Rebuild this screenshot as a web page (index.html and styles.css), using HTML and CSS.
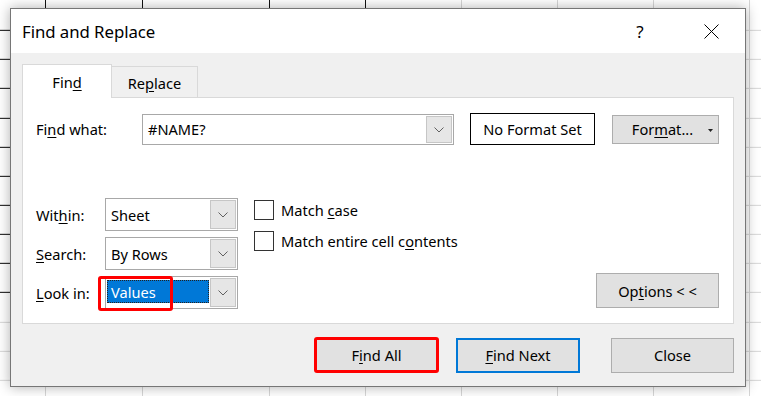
FILE: index.html
```html
<!DOCTYPE html>
<html>
<head>
<meta charset="utf-8">
<link rel="stylesheet" href="styles.css">
</head>
<body>
<div class="sheet">
  <div class="table"></div>
  <div class="dialog">
    <div class="titlebar">
      <span class="title">Find and Replace</span>
      <span class="help">?</span>
      <span class="close">
        <svg width="15" height="15" viewBox="0 0 15 15"><path d="M0.5 0.5 L14.5 14.5 M14.5 0.5 L0.5 14.5" stroke="#000" stroke-width="1" fill="none"/></svg>
      </span>
    </div>
    <div class="body">
      <div class="tabs">
        <div class="tab tab-active">Fin<u>d</u></div>
        <div class="tab tab-other">Re<u>p</u>lace</div>
      </div>
      <div class="panel">
        <div class="row-find">
          <span class="lbl lbl-find">Fi<u>n</u>d what:</span>
          <div class="combo combo-find">
            <span class="combo-text">#NAME?</span>
            <span class="drop"><svg width="10" height="6" viewBox="0 0 10 6"><path d="M0.5 0.5 L5 5 L9.5 0.5" stroke="#606060" stroke-width="1" fill="none"/></svg></span>
          </div>
          <div class="noformat">No Format Set</div>
          <div class="btn btn-format">For<u>m</u>at...<svg class="tri" width="5" height="3" viewBox="0 0 5 3"><path d="M0 0 L5 0 L2.5 3 Z" fill="#222"/></svg></div>
        </div>
        <div class="lower">
          <div class="opts">
            <div class="opt-row">
              <span class="lbl lbl-opt">Wit<u>h</u>in:</span>
              <div class="combo combo-opt">
                <span class="combo-text">Sheet</span>
                <span class="drop"><svg width="10" height="6" viewBox="0 0 10 6"><path d="M0.5 0.5 L5 5 L9.5 0.5" stroke="#606060" stroke-width="1" fill="none"/></svg></span>
              </div>
            </div>
            <div class="opt-row">
              <span class="lbl lbl-opt"><u>S</u>earch:</span>
              <div class="combo combo-opt">
                <span class="combo-text">By Rows</span>
                <span class="drop"><svg width="10" height="6" viewBox="0 0 10 6"><path d="M0.5 0.5 L5 5 L9.5 0.5" stroke="#606060" stroke-width="1" fill="none"/></svg></span>
              </div>
            </div>
            <div class="opt-row">
              <span class="lbl lbl-opt"><u>L</u>ook in:</span>
              <div class="combo combo-opt combo-focus">
                <span class="combo-sel">Values</span>
                <span class="drop"><svg width="10" height="6" viewBox="0 0 10 6"><path d="M0.5 0.5 L5 5 L9.5 0.5" stroke="#606060" stroke-width="1" fill="none"/></svg></span>
              </div>
            </div>
          </div>
          <div class="checks">
            <div class="check"><span class="box"></span><span>Match <u>c</u>ase</span></div>
            <div class="check"><span class="box"></span><span>Match entire cell c<u>o</u>ntents</span></div>
          </div>
          <div class="btn btn-options">Op<u>t</u>ions &lt; &lt;</div>
        </div>
      </div>
      <div class="actions">
        <div class="btn btn-action btn-findall">F<u>i</u>nd All</div>
        <div class="btn btn-action btn-findnext"><u>F</u>ind Next</div>
        <div class="btn btn-action btn-close">Close</div>
      </div>
    </div>
    <div class="mark"></div>
  </div>
</div>
</body>
</html>
```
FILE: styles.css
```css
* { box-sizing: border-box; }
html, body { margin: 0; padding: 0; }
body {
  font-family: "Segoe UI", "Noto Sans", "Open Sans", sans-serif;
  color: #000;
  background: #fff;
}
u { text-decoration: underline; text-underline-offset: 2px; text-decoration-thickness: 1px; }

.sheet {
  position: relative;
  width: 761px;
  height: 396px;
  overflow: hidden;
  background-color: #fff;
  background-image:
    repeating-linear-gradient(to bottom, transparent 0 28.15px, #d6d6d6 28.15px 29.15px),
    linear-gradient(to right,
      transparent 0 45px, #d6d6d6 45px 46px,
      transparent 46px 142px, #d6d6d6 142px 143px,
      transparent 143px 269px, #d6d6d6 269px 270px,
      transparent 270px 365px, #d6d6d6 365px 366px,
      transparent 366px 461px, #d6d6d6 461px 462px,
      transparent 462px 557px, #d6d6d6 557px 558px,
      transparent 558px 653px, #d6d6d6 653px 654px,
      transparent 654px 749px, #d6d6d6 749px 750px,
      transparent 750px);
  background-position: 0 1.85px, 0 0;
}
.table {
  width: 366px;
  height: 294px;
  background-image:
    repeating-linear-gradient(to bottom, transparent 0 28.15px, #111 28.15px 29.15px),
    linear-gradient(to right,
      transparent 0 45px, #111 45px 46px,
      transparent 46px 142px, #111 142px 143px,
      transparent 143px 269px, #111 269px 270px,
      transparent 270px 365px, #111 365px 366px);
  background-position: 0 1.85px, 0 0;
}

.dialog {
  position: absolute;
  left: 10px;
  top: 8px;
  width: 736px;
  height: 379px;
  border: 1px solid #767676;
  background: #f0f0f0;
  box-shadow: 0 0 12px rgba(0,0,0,0.32);
  display: flex;
  flex-direction: column;
}
.titlebar {
  height: 44px;
  background: #fff;
  display: flex;
  align-items: center;
  padding: 0 11px;
}
.title {
  flex: 1;
  font-size: 16.8px;
  letter-spacing: -0.05px;
}
.help {
  width: 20px;
  text-align: center;
  font-size: 17px;
  margin-right: 38px;
}
.close {
  width: 46px;
  height: 44px;
  display: flex;
  align-items: center;
  justify-content: center;
}
.close svg { display: block; }

.body {
  flex: 1;
  padding: 11px 11px 0 11px;
  font-size: 14.6px;
}
.tabs {
  display: flex;
  align-items: flex-end;
  height: 33px;
}
.tab {
  display: flex;
  align-items: center;
  justify-content: center;
  border: 1px solid #d9d9d9;
  border-bottom: none;
}
.tab-active {
  width: 90px;
  height: 34px;
  margin-bottom: -1px;
  background: #fff;
  position: relative;
  z-index: 1;
}
.tab-other {
  width: 86px;
  height: 31px;
  border-left: none;
  background: #f0f0f0;
  padding-top: 2px;
}
.panel {
  height: 227px;
  background: #fff;
  border: 1px solid #d9d9d9;
  padding: 15px 14px 0 13px;
}
.row-find {
  display: flex;
  align-items: center;
  height: 32px;
}
.lbl { display: block; }
.lbl-find { width: 106px; }
.combo {
  display: flex;
  align-items: stretch;
  border: 1px solid #a8a8a8;
  background: #fff;
  padding: 1px;
}
.combo-text {
  flex: 1;
  display: flex;
  align-items: center;
  padding-left: 4px;
}
.drop {
  width: 26px;
  background: #e6e6e6;
  border: 1px solid #c6c6c6;
  display: flex;
  align-items: center;
  justify-content: center;
  padding-top: 1px;
}
.drop svg { display: block; }
.combo-find {
  width: 312px;
  height: 31px;
}
.noformat {
  width: 125px;
  height: 32px;
  margin-left: 16px;
  border: 1px solid #000;
  display: flex;
  align-items: center;
  justify-content: center;
}
.btn {
  background: #e1e1e1;
  border: 1px solid #adadad;
  display: flex;
  align-items: center;
  justify-content: center;
}
.btn-format {
  width: 107px;
  height: 29px;
  margin-left: 17px;
  position: relative;
  padding-right: 6px;
}
.tri {
  position: absolute;
  right: 5px;
  top: 13px;
}

.lower {
  display: flex;
  margin-top: 53px;
}
.opts {
  display: flex;
  flex-direction: column;
  gap: 6px;
}
.opt-row {
  display: flex;
  align-items: center;
}
.lbl-opt { width: 69px; }
.combo-opt {
  width: 133px;
  height: 33px;
}
.combo-focus { padding: 3px 1px 5px 1px; }
.combo-focus .drop { margin: -2px 0 -4px 0; }
.combo-sel {
  flex: 1;
  background: #0078d7;
  color: #fff;
  border: 1px dotted #222;
  display: flex;
  align-items: center;
  padding-left: 3px;
  margin-right: 1px;
}
.checks {
  display: flex;
  flex-direction: column;
  gap: 11px;
  margin-left: 16px;
  padding-top: 2px;
}
.check {
  display: flex;
  align-items: center;
  gap: 7px;
  height: 20px;
}
.box {
  width: 20px;
  height: 20px;
  border: 1px solid #333;
  background: #fff;
}
.btn-options {
  margin-left: auto;
  align-self: flex-end;
  width: 123px;
  height: 35px;
  margin-bottom: 1px;
}

.actions {
  display: flex;
  justify-content: flex-end;
  align-items: center;
  margin-top: 13px;
}
.btn-action { height: 35px; }
.btn-findall {
  width: 125px;
  height: 36px;
  border: 3px solid #ff0000;
  border-radius: 3px;
}
.btn-findnext {
  width: 124px;
  margin-left: 17px;
  border: 2px solid #0078d7;
}
.btn-close {
  width: 123px;
  margin-left: 31px;
}

.mark {
  position: absolute;
  left: 87px;
  top: 267px;
  width: 75px;
  height: 35px;
  border: 3.5px solid #ff0000;
  border-radius: 3px;
}
```
